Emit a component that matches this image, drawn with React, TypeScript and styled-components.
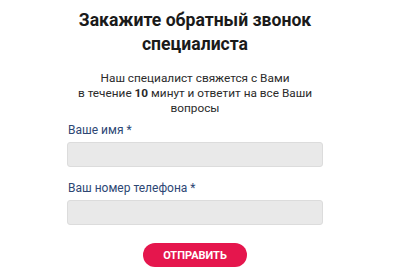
import styled, { createGlobalStyle } from 'styled-components';

const GlobalStyle = createGlobalStyle`
  html, body {
    margin: 0;
    padding: 0;
    background: #ffffff;
  }
  body {
    font-family: Roboto, "Noto Sans", sans-serif;
  }
`;

const CallbackForm = () => {
  return (
    <>
      <GlobalStyle />
      <Wrapper>
        <Title>
          Закажите обратный звонок
          <br />
          специалиста
        </Title>
        <Description>
          Наш специалист свяжется с Вами
          <br />в течение <b>10</b> минут и ответит на все Ваши
          <br />
          вопросы
        </Description>
        <Form onSubmit={(e) => e.preventDefault()}>
          <Field>
            <Label>Ваше имя *</Label>
            <Input type="text" />
          </Field>
          <Field>
            <Label>Ваш номер телефона *</Label>
            <Input type="tel" />
          </Field>
          <SubmitButton type="submit">ОТПРАВИТЬ</SubmitButton>
        </Form>
      </Wrapper>
    </>
  );
};

export default CallbackForm;

const Wrapper = styled.div`
  width: 400px;
  height: 272px;
  box-sizing: border-box;
  padding-top: 8px;
  display: flex;
  flex-direction: column;
  align-items: center;
  overflow: hidden;
`;

const Title = styled.h2`
  margin: 0 0 0 -10px;
  width: 300px;
  font-size: 17.6px;
  line-height: 24px;
  font-weight: 700;
  color: #1a1a1a;
  text-align: center;
  white-space: nowrap;
`;

const Description = styled.p`
  margin: 15px 0 0 -10px;
  width: 300px;
  font-size: 11.8px;
  line-height: 15px;
  color: #2a2a2a;
  text-align: center;
  white-space: nowrap;

  b {
    font-weight: 700;
  }
`;

const Form = styled.form`
  margin: 6px 0 0 -10px;
  width: 256px;
  display: flex;
  flex-direction: column;
  align-items: center;
`;

const Field = styled.label`
  width: 100%;
  display: flex;
  flex-direction: column;
  margin-bottom: 13px;
`;

const Label = styled.span`
  font-size: 12px;
  line-height: 16px;
  color: #2d4774;
  padding-left: 1px;
  margin-bottom: 4px;
`;

const Input = styled.input`
  width: 100%;
  height: 25px;
  box-sizing: border-box;
  background: #e9e9e9;
  border: 1px solid #dcdcdc;
  border-radius: 3px;
  outline: none;
`;

const SubmitButton = styled.button`
  margin-top: 5px;
  width: 104px;
  height: 24px;
  border: none;
  border-radius: 12px;
  background: #e5164d;
  color: #ffffff;
  font-family: Roboto, sans-serif;
  font-size: 11px;
  font-weight: 700;
  cursor: pointer;
`;
